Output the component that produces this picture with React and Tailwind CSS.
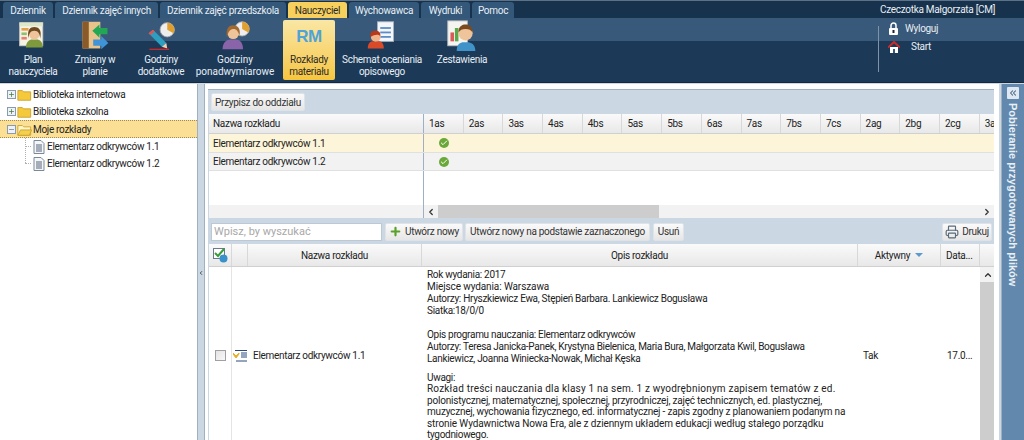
import React from 'react';
import { ChevronLeft, ChevronRight, ChevronUp, ChevronsLeft, Printer, Plus, Check, Minus } from 'lucide-react';

const tabs = [
  ['Dziennik', 'w-[50px]'],
  ['Dziennik zajęć innych', 'w-[103px]'],
  ['Dziennik zajęć przedszkola', 'w-[126px]'],
  ['Nauczyciel', 'w-[59px]', true],
  ['Wychowawca', 'w-[70px]'],
  ['Wydruki', 'w-[49px]'],
  ['Pomoc', 'w-[42px]'],
];

const classes = ['1as', '2as', '3as', '4as', '4bs', '5as', '5bs', '6as', '7as', '7bs', '7cs', '2ag', '2bg', '2cg', '3a'];

function Person({ hair = '#7a4a20', shirt = '#8a9a40' }) {
  return (
    <g>
      <path d="M10 31c0-6 4-9 7-9h5c4 0 7 3 7 9z" fill={shirt} />
      <circle cx="19.5" cy="16" r="6" fill="#f0c49a" />
      <path d="M13 21c-2-10 2-13 6.500-13s9 3 6.500 13c0-5-2-9-6.500-9s-6.500 4-6.500 9z" fill={hair} />
    </g>
  );
}

function RibbonIcon({ kind }) {
  if (kind === 'rm') {
    return <div className="h-[34px] flex items-center justify-center text-[17px] font-bold text-[#4fa3d8] tracking-tight font-['Liberation_Sans',sans-serif]">RM</div>;
  }
  return (
    <svg width="32" height="32" viewBox="0 0 36 36" className="mx-auto">
      {kind === 'plan' && (
        <g>
          <rect x="3" y="3" width="26" height="26" fill="#f6f3e6" stroke="#c8c8c0" />
          <rect x="3" y="3" width="26" height="4" fill="#dce8c8" />
          <rect x="5" y="9" width="8" height="3" fill="#e6a04a" />
          <rect x="5" y="14" width="6" height="3" fill="#8fc06a" />
          <rect x="5" y="19" width="6" height="3" fill="#e88070" />
          <Person hair="#6d4a22" shirt="#7f9a3c" />
        </g>
      )}
      {kind === 'zmiany' && (
        <g>
          <rect x="4" y="2" width="20" height="30" fill="#e8c48c" />
          <rect x="4" y="2" width="7" height="30" fill="#8a5a28" />
          <path d="M15 12l8-7v4h9v7h-9v4z" fill="#22a855" />
          <path d="M33 26l-8 7v-4h-9v-7h9v-4z" fill="#3f93d8" />
        </g>
      )}
      {kind === 'dodatkowe' && (
        <g>
          <circle cx="25" cy="11" r="8" fill="#eee" stroke="#aaa" />
          <path d="M25 11V3a8 8 0 0 1 7 12z" fill="#e0a030" />
          <path d="M4 15l5-4 15 15-5 4z" fill="#2e9fc0" />
          <path d="M4 15l5-4 2 2-5 4z" fill="#e8504a" />
          <path d="M19 30l5-4 1 6z" fill="#f0d0b0" />
          <path d="M5 33h22" stroke="#d02828" strokeWidth="1.5" />
        </g>
      )}
      {kind === 'ponad' && (
        <g>
          <circle cx="26" cy="10" r="8" fill="#eee" stroke="#aaa" />
          <path d="M26 10V2a8 8 0 0 1 7 12z" fill="#e0a030" />
          <path d="M4 33c0-8 5-11 9-11h6c4 0 8 3 8 11z" fill="#8a64a8" />
          <circle cx="16" cy="15" r="6.500" fill="#f0c49a" />
          <path d="M9 20c-2-11 3-14 7-14s9 3 7 12c-1-5-3-8-7-8s-6 4-7 10z" fill="#a06a30" />
        </g>
      )}
      {kind === 'schemat' && (
        <g>
          <rect x="13" y="2" width="18" height="22" fill="#f4f6fa" stroke="#a8b4c4" />
          <rect x="16" y="8" width="12" height="2" fill="#5a8cc8" />
          <rect x="16" y="13" width="12" height="2" fill="#5a8cc8" />
          <rect x="16" y="18" width="12" height="2" fill="#5a8cc8" />
          <path d="M2 32c0-6 3-8 6-8h6c3 0 6 2 6 8z" fill="#d84a28" />
          <circle cx="11" cy="19" r="5.500" fill="#f0b48a" />
          <path d="M5 19c-1-6 3-7 6-7s6 2 5 6c-2-2-6-2-11 1z" fill="#b83818" />
        </g>
      )}
      {kind === 'zest' && (
        <g>
          <rect x="2" y="1" width="22" height="28" fill="#f4f4f0" stroke="#bbb" />
          <rect x="5" y="14" width="4" height="10" fill="#d85a5a" />
          <rect x="10" y="9" width="4" height="15" fill="#5aa84a" />
          <path d="M12 35c0-8 4-10 8-10h4c4 0 9 2 9 10z" fill="#3f93c8" />
          <circle cx="22" cy="15" r="8" fill="#f0c49a" />
          <path d="M14 14c0-7 4-9 8-9s8 2 8 9c-2-3-4-4-8-4s-6 1-8 4z" fill="#7a4a20" />
        </g>
      )}
    </svg>
  );
}

function RibbonItem({ kind, width, lines, active, wide }) {
  return (
    <div className={`${width} h-[60px] shrink-0 flex flex-col items-center rounded-[2px] ${wide ? 'tracking-normal' : ''} ${active ? 'ml-[8px] bg-gradient-to-b from-[#f9e7a3] to-[#f7c63c] text-[#2a2a2a]' : 'text-[#e8eef4]'}`}>
      <div className="h-[34px] w-full"><RibbonIcon kind={kind} /></div>
      <div className="text-center leading-[12px]">
        {lines.map((l) => <div key={l}>{l}</div>)}
      </div>
    </div>
  );
}

function Folder({ open }) {
  return (
    <svg width="15" height="13" viewBox="0 0 17 14" className="shrink-0">
      <path d="M1 2.500h5l1.500 1.500h8v9.500H1z" fill={open ? '#fff6c8' : '#f5c93c'} stroke="#c9a02a" />
      {open && <path d="M1 13.500l3-6h12.500l-2.500 6z" fill="#f5d050" stroke="#c9a02a" />}
    </svg>
  );
}

function Expander({ open }) {
  return (
    <div className="w-[9px] h-[9px] border border-[#8a9ab0] bg-[#eef2f6] flex items-center justify-center shrink-0">
      {open ? <Minus size={7} strokeWidth={2} color="#4a5a70" /> : <Plus size={7} strokeWidth={2.5} color="#3a7a3a" />}
    </div>
  );
}

function Doc() {
  return (
    <svg width="12" height="14" viewBox="0 0 12 14" className="shrink-0">
      <path d="M1 .5h7l3 3v10H1z" fill="#f4f6f8" stroke="#7a8898" />
      <path d="M3 5h6M3 7h6M3 9h6M3 11h6" stroke="#56657a" />
    </svg>
  );
}

function GreenCheck() {
  return (
    <div className="w-[10px] h-[10px] rounded-full bg-[#6aa83a] flex items-center justify-center">
      <Check size={8} strokeWidth={3} color="#fff" />
    </div>
  );
}

function Btn({ children, className = '' }) {
  return (
    <div className={`h-[18px] flex items-center justify-center gap-[3px] bg-gradient-to-b from-[#fafafa] to-[#e6e6e6] border border-[#dfe3e7] rounded-[2px] text-[#333] whitespace-nowrap ${className}`}>
      {children}
    </div>
  );
}

export default function App() {
  return (
    <div className="w-[1024px] h-[440px] overflow-hidden flex flex-col bg-[#cbd8e4] text-[10px] tracking-[-0.3px] text-[#222] font-['Roboto','Liberation_Sans',sans-serif]">
      {/* top tabs */}
      <div className="h-[18px] shrink-0 bg-[#17324c] border-t border-[#5d7287] flex items-end pl-[3px] gap-[2px] text-[#e8eef4]">
        {tabs.map(([t, w, active]) => (
          <div key={t} className={`${w} h-[16px] rounded-t-[3px] flex items-center justify-center whitespace-nowrap ${active ? 'bg-[#f6cf5c] text-[#2a2a2a]' : 'bg-[#33587a]'}`}>{t}</div>
        ))}
        <div className="ml-auto pr-[29px] self-center text-[#e8eef4]">Czeczotka Małgorzata [CM]</div>
      </div>

      {/* ribbon */}
      <div className="h-[65px] shrink-0 flex pt-[2px] pl-[3px] bg-[linear-gradient(#39597a_0,#39597a_23px,#1c3a58_23px)] border-b-[1px] border-[#15293d]">
        <RibbonItem kind="plan" width="w-[60px]" lines={['Plan', 'nauczyciela']} />
        <RibbonItem kind="zmiany" width="w-[64px]" lines={['Zmiany w', 'planie']} />
        <RibbonItem kind="dodatkowe" width="w-[68px]" lines={['Godziny', 'dodatkowe']} />
        <RibbonItem kind="ponad" width="w-[80px]" lines={['Godziny', 'ponadwymiarowe']} wide />
        <RibbonItem kind="rm" width="w-[52px]" lines={['Rozkłady', 'materiału']} active />
        <RibbonItem kind="schemat" width="w-[94px]" lines={['Schemat oceniania', 'opisowego']} />
        <RibbonItem kind="zest" width="w-[66px]" lines={['Zestawienia']} />
        <div className="ml-auto w-[146px] flex">
          <div className="w-px h-[46px] mt-[6px] bg-[#7c94aa]" />
          <div className="pl-[9px] -mt-px text-[#e8eef4]">
            <div className="flex items-center h-[19px]">
              <svg width="11" height="13" viewBox="0 0 11 13">
                <path d="M3 6V3.500a2.500 2.500 0 0 1 5 0V6" fill="none" stroke="#fff" strokeWidth="1.5" />
                <rect x="1" y="6" width="9" height="7" rx="1" fill="#fff" />
                <rect x="4.500" y="8" width="2" height="3" fill="#223" />
              </svg>
              <span className="ml-[6px]">Wyloguj</span>
            </div>
            <div className="flex items-center h-[17px]">
              <svg width="12" height="12" viewBox="0 0 12 12">
                <path d="M2 6h8v6H2z" fill="#fff" />
                <path d="M0 6.500L6 1l6 5.500" fill="none" stroke="#d02828" strokeWidth="2" />
                <rect x="5" y="8" width="2" height="4" fill="#3a5a7a" />
              </svg>
              <span className="ml-[11px]">Start</span>
            </div>
          </div>
        </div>
      </div>

      {/* body */}
      <div className="flex-1 flex min-h-0 pt-px">
        {/* tree */}
        <div className="w-[198px] shrink-0 bg-white border-r border-[#9fb0c0] pt-[2px]">
          <div className="h-[17px] flex items-center gap-px pl-[7px]"><Expander /><Folder /><span>Biblioteka internetowa</span></div>
          <div className="h-[17px] flex items-center gap-px pl-[7px]"><Expander /><Folder /><span>Biblioteka szkolna</span></div>
          <div className="h-[18px] flex items-center gap-px pl-[7px] bg-[#fbdf95] border-y border-dotted border-[#a08a50]"><Expander open /><Folder open /><span>Moje rozkłady</span></div>
          <div className="ml-[25px] border-l border-dotted border-[#b0b0b0] h-[25px] -mb-[25px]" />
          <div className="h-[17px] flex items-center gap-[2px] pl-[25px]"><div className="w-[6px] border-t border-dotted border-[#b0b0b0]" /><Doc /><span>Elementarz odkrywców 1.1</span></div>
          <div className="h-[17px] flex items-center gap-[2px] pl-[25px]"><div className="w-[6px] border-t border-dotted border-[#b0b0b0]" /><Doc /><span>Elementarz odkrywców 1.2</span></div>
        </div>

        {/* splitter */}
        <div className="w-[6px] shrink-0 flex items-center justify-center">
          <ChevronLeft size={8} strokeWidth={3} color="#222" className="mt-[22px]" />
        </div>

        {/* center */}
        <div className="w-[795px] shrink-0 flex flex-col min-w-0 border-l border-[#9fb0c0] bg-white pt-[5px] pl-[3px] pr-[5px]">
          <div className="flex-1 min-h-0 flex flex-col bg-[#cbd8e4] border-t border-[#9fb0c0] pl-px">
            {/* upper grid */}
            <div className="h-[24px] shrink-0 flex items-center pl-[2px]"><Btn className="w-[94px]">Przypisz do oddziału</Btn></div>
            <div className="h-[104px] shrink-0 bg-white flex flex-col overflow-hidden">
              <div className="h-[20px] shrink-0 flex bg-gradient-to-b from-[#fafafa] to-[#e8e8e8] border-b border-[#d0d0d0]">
                <div className="w-[215px] shrink-0 pl-[4px] flex items-center border-r border-[#9fb0c0]">Nazwa rozkładu</div>
                {classes.map((c) => (
                  <div key={c} className="w-[39.7px] shrink-0 pl-[5px] flex items-center border-r border-[#d8d8d8]">{c}</div>
                ))}
              </div>
              <div className="h-[19px] shrink-0 flex bg-[#fdf5d9] border-b border-[#e0e0e0]">
                <div className="w-[215px] shrink-0 pl-[4px] flex items-center border-r border-[#9fb0c0]">Elementarz odkrywców 1.1</div>
                <div className="pl-[15px] flex items-center"><GreenCheck /></div>
              </div>
              <div className="h-[18px] shrink-0 flex bg-[#f2f2f2] border-b border-[#e0e0e0]">
                <div className="w-[215px] shrink-0 pl-[4px] flex items-center border-r border-[#9fb0c0]">Elementarz odkrywców 1.2</div>
                <div className="pl-[15px] flex items-center"><GreenCheck /></div>
              </div>
              <div className="flex-1 flex">
                <div className="w-[215px] shrink-0 border-r border-[#9fb0c0]" />
              </div>
              <div className="h-[13px] shrink-0 flex">
                <div className="w-[215px] shrink-0 bg-[#f2f2f2] border-r border-[#9fb0c0]" />
                <div className="flex-1 bg-[#f2f2f2] flex items-center">
                  <ChevronLeft size={10} strokeWidth={3} color="#333" className="ml-[2px]" />
                  <div className="w-[221px] h-full bg-[#cdcdcd] ml-[2px]" />
                  <ChevronRight size={10} strokeWidth={3} color="#333" className="ml-auto mr-[2px]" />
                </div>
              </div>
            </div>

            {/* lower toolbar */}
            <div className="h-[26px] shrink-0 flex items-center pt-px">
              <input readOnly placeholder="Wpisz, by wyszukać" className="w-[171px] h-[18px] ml-[2px] px-[2px] bg-white border border-[#bcc8d4] outline-none placeholder:text-[#a8a8a8] text-[11px] tracking-normal" />
              <Btn className="ml-[3px] w-[78px]"><Plus size={13} strokeWidth={4} color="#5aa02c" />Utwórz nowy</Btn>
              <Btn className="ml-[2px] w-[185px]">Utwórz nowy na podstawie zaznaczonego</Btn>
              <Btn className="ml-[3px] w-[31px]">Usuń</Btn>
              <Btn className="ml-auto mr-[2px] w-[50px]"><Printer size={14} color="#5a6a78" />Drukuj</Btn>
            </div>

            {/* lower grid */}
            <div className="flex-1 min-h-0 bg-white flex flex-col overflow-hidden">
              <div className="h-[23px] shrink-0 flex bg-gradient-to-b from-[#fafafa] to-[#e8e8e8] border-b border-[#d0d0d0]">
                <div className="w-[23px] shrink-0 flex items-center justify-center border-r border-[#d8d8d8]">
                  <svg width="16" height="16" viewBox="0 0 16 16">
                    <rect x="1.5" y="1.5" width="11" height="10" fill="#fff" stroke="#6a7a8a" />
                    <path d="M3 6l3 3 6-7" fill="none" stroke="#3a9a3a" strokeWidth="2" />
                    <circle cx="11.5" cy="11.5" r="4" fill="#3a90c8" />
                  </svg>
                </div>
                <div className="w-[16px] shrink-0 border-r border-[#d8d8d8]" />
                <div className="w-[174px] shrink-0 flex items-center justify-center border-r border-[#d8d8d8]">Nazwa rozkładu</div>
                <div className="w-[436px] shrink-0 flex items-center justify-center border-r border-[#d8d8d8]">Opis rozkładu</div>
                <div className="w-[83px] shrink-0 flex items-center justify-center gap-[5px] border-r border-[#d8d8d8]">Aktywny
                  <div className="w-0 h-0 border-x-[4px] border-x-transparent border-t-[4px] border-t-[#5a9ad0]" />
                </div>
                <div className="w-[39px] shrink-0 flex items-center pl-[5px] border-r border-[#d8d8d8]">Data...</div>
              </div>
              <div className="flex-1 min-h-0 flex">
                <div className="w-[23px] shrink-0 border-r border-[#e4e4e4] flex items-center justify-center pt-[4px]">
                  <div className="w-[11px] h-[11px] border border-[#a0a0a0] bg-gradient-to-br from-[#e4e4e4] to-[#f8f8f8]" />
                </div>
                <div className="w-[16px] shrink-0 flex items-center justify-center pt-[4px]">
                  <svg width="14" height="12" viewBox="0 0 14 12">
                    <path d="M0 3l3 3 3-3v1L3 8 0 4z" fill="#e8b020" stroke="#e8b020" />
                    <path d="M2 .5h12M8 3h6M8 5h6M8 7h6M3 11h11" stroke="#2a4a80" />
                  </svg>
                </div>
                <div className="w-[174px] shrink-0 flex items-center pl-[5px] pt-[4px]">Elementarz odkrywców 1.1</div>
                <div className="w-[436px] shrink-0 pl-[5px] pt-[2px] pr-[15px] leading-[12px]">
                  <p>Rok wydania: 2017</p>
                  <p className="tracking-[-0.1px]">Miejsce wydania: Warszawa</p>
                  <p>Autorzy: Hryszkiewicz Ewa, Stępień Barbara. Lankiewicz Bogusława</p>
                  <p>Siatka:18/0/0</p>
                  <p className="mt-[12px]">Opis programu nauczania: Elementarz odkrywców</p>
                  <p>Autorzy: Teresa Janicka-Panek, Krystyna Bielenica, Maria Bura, Małgorzata Kwil, Bogusława Lankiewicz, Joanna Winiecka-Nowak, Michał Kęska</p>
                  <p className="mt-[7px]">Uwagi:</p>
                  <div className="-mt-px leading-[11.5px] whitespace-nowrap">
                    <p className="tracking-[0.2px]">Rozkład treści nauczania dla klasy 1 na sem. 1 z wyodrębnionym zapisem tematów z ed.</p>
                    <p className="tracking-[-0.2px]">polonistycznej, matematycznej, społecznej, przyrodniczej, zajęć technicznych, ed. plastycznej,</p>
                    <p className="tracking-[-0.2px]">muzycznej, wychowania fizycznego, ed. informatycznej - zapis zgodny z planowaniem podanym na</p>
                    <p className="tracking-[-0.1px]">stronie Wydawnictwa Nowa Era, ale z dziennym układem edukacji według stałego porządku</p>
                    <p>tygodniowego.</p>
                  </div>
                </div>
                <div className="w-[83px] shrink-0 flex items-center pl-[5px] pt-[4px]">Tak</div>
                <div className="w-[39px] shrink-0 flex items-center pl-[6px] pt-[4px]">17.0...</div>
                <div className="w-[15px] shrink-0 bg-[#f2f2f2] flex flex-col items-center">
                  <ChevronUp size={10} strokeWidth={3} color="#333" className="mt-[3px]" />
                  <div className="w-full flex-1 bg-[#cdcdcd] mt-[2px]" />
                </div>
              </div>
            </div>
          </div>
        </div>

        {/* right collapsed panel */}
        <div className="flex-1 flex pl-[2px]">
          <div className="flex-1 bg-[#6289ad] border-l border-[#9fb0c0] flex flex-col items-center pt-[3px]">
            <div className="w-[12px] h-[12px] bg-[#dfe8f0] flex items-center justify-center rounded-[1px]">
              <ChevronsLeft size={10} color="#4a6a8a" strokeWidth={2.5} />
            </div>
            <div className="mt-[4px] [writing-mode:vertical-rl] font-bold text-[11px] tracking-normal text-[#e8f0f6] whitespace-nowrap font-['Liberation_Sans',sans-serif]">Pobieranie przygotowanych plików</div>
          </div>
        </div>
      </div>
    </div>
  );
}
